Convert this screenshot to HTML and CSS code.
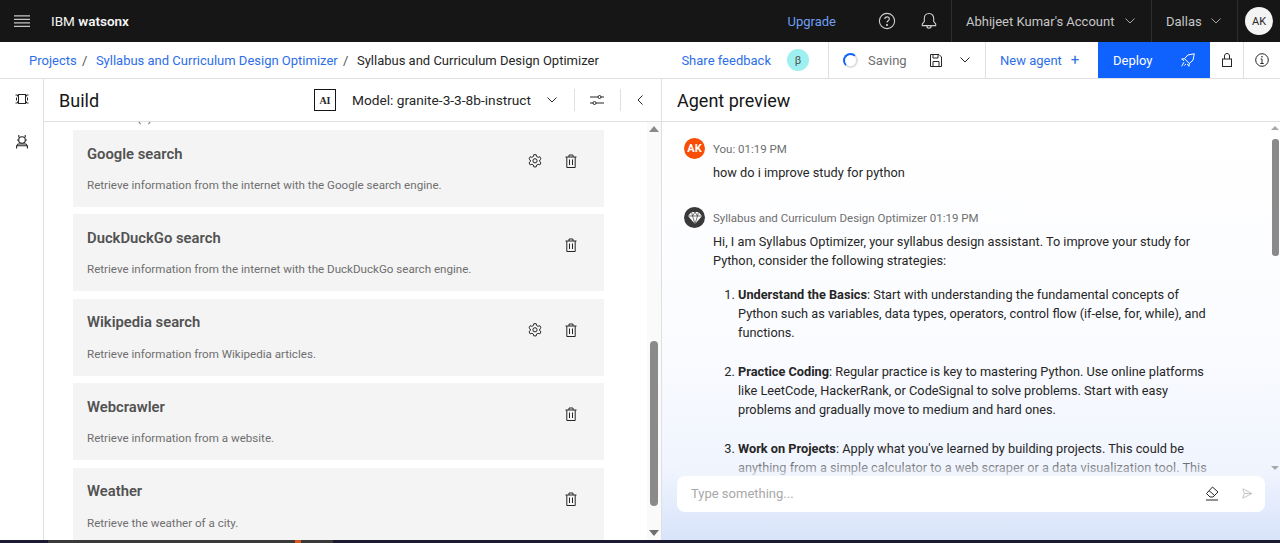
FILE: index.html

```html
<!DOCTYPE html>
<html lang="en">
<head>
  <meta charset="UTF-8">
  <title>IBM watsonx - Agent Lab</title>
  <link rel="stylesheet" href="styles.css">
</head>
<body>
  <header class="topbar">
    <svg class="menu-icon" width="16" height="12" viewBox="0 0 16 12"><path d="M0 .8h16M0 4.300h16M0 7.800h16M0 11.300h16" stroke="#c6c6c6" stroke-width="1.200"/></svg>
    <div class="brand">IBM <b>watsonx</b></div>
    <div class="topbar-right">
      <a class="upgrade">Upgrade</a>
      <svg class="top-icon help" width="18" height="18" viewBox="0 0 18 18" fill="none" stroke="#d0d0d0" stroke-width="1.100"><circle cx="9" cy="9" r="7.600"/><path d="M6.800 7.100c0-1.300 1-2.200 2.300-2.200s2.200.9 2.200 2c0 1.900-2.300 1.800-2.300 3.700"/><circle cx="9" cy="13" r=".5" fill="#d0d0d0"/></svg>
      <svg class="top-icon bell" width="18" height="18" viewBox="0 0 18 18" fill="none" stroke="#d0d0d0" stroke-width="1.100"><path d="M9 1.500c-3 0-4.700 2.300-4.700 5v3L2.300 12v1.600h13.400V12l-2-2.500v-3c0-2.700-1.700-5-4.700-5zM6.800 13.600c0 1.600 1 2.700 2.200 2.700s2.200-1.100 2.200-2.700"/></svg>
      <div class="top-cell account">Abhijeet Kumar's Account <svg class="chev" width="10" height="6" viewBox="0 0 10 6"><path d="M.5.5 5 5 9.500.5" fill="none" stroke="#a8a8a8"/></svg></div>
      <div class="top-cell region">Dallas <svg class="chev" width="10" height="6" viewBox="0 0 10 6"><path d="M.5.5 5 5 9.500.5" fill="none" stroke="#a8a8a8"/></svg></div>
      <div class="top-cell avatar-cell"><span class="avatar">AK</span></div>
    </div>
  </header>

  <nav class="crumbbar">
    <div class="crumbs">
      <a>Projects</a><span class="sep">/</span>
      <a>Syllabus and Curriculum Design Optimizer</a><span class="sep">/</span>
      <span class="current">Syllabus and Curriculum Design Optimizer</span>
    </div>
    <div class="actions">
      <a class="feedback">Share feedback</a>
      <span class="beta">β</span>
      <div class="action-cell saving">
        <span class="spinner"></span>
        <span class="saving-text">Saving</span>
        <svg class="save-icon" width="12" height="13" viewBox="0 0 12 13" fill="none" stroke="#262626"><path d="M.5.5h8.500l2.500 2.500v9.500H.5z"/><path d="M3 .5v3.500h5V.5M3 12.500V7.500h6v5"/></svg>
        <svg class="save-chev" width="10" height="6" viewBox="0 0 10 6"><path d="M.5.500 5 5 9.500.500" fill="none" stroke="#262626"/></svg>
      </div>
      <a class="action-cell new-agent">New agent <span class="plus">+</span></a>
      <a class="deploy">Deploy
        <svg width="14" height="14" viewBox="0 0 14 14" fill="none" stroke="#fff"><path d="M13.300.7 6.800 2 3.500 5.700 8.300 10.500 12 7.200zM3.500 5.700l-2.800.4 2.400 1.600M8.300 10.500l-.4 2.800-1.600-2.400M3 9.200 .7 13.300M4.800 11 3.500 12.500"/></svg>
      </a>
      <div class="icon-cell"><svg width="10" height="14" viewBox="0 0 10 14" fill="none" stroke="#262626"><rect x=".5" y="6" width="9" height="7.500"/><path d="M2.500 6V3c0-1.500 1-2.500 2.500-2.500S7.500 1.500 7.500 3v3"/></svg></div>
      <div class="icon-cell info"><svg width="14" height="14" viewBox="0 0 14 14" fill="none" stroke="#262626"><circle cx="7" cy="7" r="6.300"/><path d="M5.300 10.500h3.400M7 10.500V6H5.700"/><circle cx="7" cy="3.800" r=".4"/></svg></div>
    </div>
  </nav>

  <div class="workspace">
    <aside class="sidenav">
      <svg width="14" height="10" viewBox="0 0 14 10" fill="none" stroke="#262626"><rect x="3.500" y=".5" width="7" height="9"/><path d="M.5 1h2v1.500M.5 9h2V7.500M13.500 1h-2v1.500M13.500 9h-2V7.500M1.500 3.500v3M12.500 3.500v3"/></svg>
      <svg width="12" height="14" viewBox="0 0 12 14" fill="none" stroke="#262626" stroke-width="1.100"><circle cx="6" cy="5" r="3.300"/><path d="M2.800 0v2.500M9.200 0v2.500M1 5h1.500M9.500 5H11M.6 13.500V11l1.500-2h7.800l1.500 2v2.500M.6 10.800h10.800"/></svg>
    </aside>

    <section class="build">
      <div class="panel-head build-head">
        <h2>Build</h2>
        <span class="ai-box">AI</span>
        <span class="model">Model: granite-3-3-8b-instruct</span>
        <svg class="model-chev" width="10" height="6" viewBox="0 0 10 6"><path d="M.5.500 5 5 9.500.500" fill="none" stroke="#262626"/></svg>
        <span class="vsep"></span>
        <svg class="tune" width="14" height="12" viewBox="0 0 14 12" fill="none" stroke="#262626"><path d="M0 3h8M11 3h3M0 9h3M6 9h8"/><circle cx="9.500" cy="3" r="1.500"/><circle cx="4.500" cy="9" r="1.500"/></svg>
        <span class="vsep"></span>
        <svg class="collapse" width="6" height="10" viewBox="0 0 6 10"><path d="M5.500.5 1 5l4.500 4.500" fill="none" stroke="#262626"/></svg>
      </div>
      <div class="tools-area">
        <div class="tools">
          <div class="tools-label">Added tools (6)</div>
          <div class="tool">
            <div class="tool-text"><h3>Google search</h3><p>Retrieve information from the internet with the Google search engine.</p></div>
            <svg class="gear" width="14" height="14" viewBox="0 0 14 14" fill="none" stroke="#262626"><path d="M5.800.7h2.400l.4 1.800 1.500.8 1.700-.6 1.200 2.100-1.300 1.200v1.600l1.300 1.200-1.200 2.100-1.700-.6-1.500.8-.4 1.800H5.800l-.4-1.800-1.500-.8-1.700.6L1 8.800l1.300-1.200V6L1 4.800 2.200 2.700l1.700.6 1.500-.8z"/><circle cx="7" cy="6.800" r="2.100"/></svg>
            <svg class="trash" width="12" height="14" viewBox="0 0 12 14" fill="none" stroke="#262626"><path d="M.5 3h11M4 3V1h4v2M1.800 3v10.500h8.400V3M4.500 5.500v5.500M7.500 5.500v5.500"/></svg>
          </div>
          <div class="tool">
            <div class="tool-text"><h3>DuckDuckGo search</h3><p>Retrieve information from the internet with the DuckDuckGo search engine.</p></div>
            <svg class="trash" width="12" height="14" viewBox="0 0 12 14" fill="none" stroke="#262626"><path d="M.5 3h11M4 3V1h4v2M1.800 3v10.500h8.400V3M4.500 5.500v5.500M7.500 5.500v5.500"/></svg>
          </div>
          <div class="tool">
            <div class="tool-text"><h3>Wikipedia search</h3><p>Retrieve information from Wikipedia articles.</p></div>
            <svg class="gear" width="14" height="14" viewBox="0 0 14 14" fill="none" stroke="#262626"><path d="M5.800.7h2.400l.4 1.800 1.500.8 1.700-.6 1.200 2.100-1.300 1.200v1.600l1.300 1.200-1.200 2.100-1.700-.6-1.500.8-.4 1.800H5.800l-.4-1.800-1.500-.8-1.700.6L1 8.800l1.300-1.200V6L1 4.800 2.200 2.700l1.700.6 1.500-.8z"/><circle cx="7" cy="6.800" r="2.100"/></svg>
            <svg class="trash" width="12" height="14" viewBox="0 0 12 14" fill="none" stroke="#262626"><path d="M.5 3h11M4 3V1h4v2M1.800 3v10.500h8.400V3M4.500 5.500v5.500M7.500 5.500v5.500"/></svg>
          </div>
          <div class="tool">
            <div class="tool-text"><h3>Webcrawler</h3><p>Retrieve information from a website.</p></div>
            <svg class="trash" width="12" height="14" viewBox="0 0 12 14" fill="none" stroke="#262626"><path d="M.5 3h11M4 3V1h4v2M1.800 3v10.500h8.400V3M4.500 5.500v5.500M7.500 5.500v5.500"/></svg>
          </div>
          <div class="tool">
            <div class="tool-text"><h3>Weather</h3><p>Retrieve the weather of a city.</p></div>
            <svg class="trash" width="12" height="14" viewBox="0 0 12 14" fill="none" stroke="#262626"><path d="M.5 3h11M4 3V1h4v2M1.800 3v10.500h8.400V3M4.500 5.500v5.500M7.500 5.500v5.500"/></svg>
          </div>
        </div>
        <div class="scrollbar left-bar">
          <span class="arrow up"></span>
          <span class="thumb"></span>
          <span class="arrow down"></span>
        </div>
      </div>
    </section>

    <section class="preview">
      <div class="panel-head preview-head"><h2>Agent preview</h2></div>
      <div class="chat-area">
        <div class="chat">
          <div class="msg you">
            <div class="msg-head"><span class="msg-avatar orange">AK</span><span class="msg-meta">You: 01:19 PM</span></div>
            <div class="msg-body"><p>how do i improve study for python</p></div>
          </div>
          <div class="msg">
            <div class="msg-head">
              <span class="msg-avatar dark"><svg width="14" height="12" viewBox="0 0 14 12" fill="#fff"><path d="M3.500 0h7L14 4 7 12 0 4z"/><path d="M0 4h14M4.500 4 7 12l2.500-8M3.500 0l1 4 2.500-4 2.500 4 1-4" fill="none" stroke="#393939" stroke-width=".7"/></svg></span>
              <span class="msg-meta">Syllabus and Curriculum Design Optimizer 01:19 PM</span>
            </div>
            <div class="msg-body">
              <p>Hi, I am Syllabus Optimizer, your syllabus design assistant. To improve your study for Python, consider the following strategies:</p>
              <ol>
                <li><b>Understand the Basics</b>: Start with understanding the fundamental concepts of Python such as variables, data types, operators, control flow (if-else, for, while), and functions.</li>
                <li><b>Practice Coding</b>: Regular practice is key to mastering Python. Use online platforms like LeetCode, HackerRank, or CodeSignal to solve problems. Start with easy problems and gradually move to medium and hard ones.</li>
                <li><b>Work on Projects</b>: Apply what you've learned by building projects. This could be anything from a simple calculator to a web scraper or a data visualization tool. This</li>
              </ol>
            </div>
          </div>
        </div>
        <div class="scrollbar right-bar">
          <span class="arrow up"></span>
          <span class="thumb"></span>
          <span class="arrow down"></span>
        </div>
        <div class="composer">
          <span class="placeholder">Type something...</span>
          <svg class="eraser" width="14" height="15" viewBox="0 0 14 15" fill="none" stroke="#262626"><path d="M7.500 1 13 6l-5 5H5L1.500 7.500zM4 4.500l5.500 5M1 14h12"/></svg>
          <svg class="send" width="11" height="11" viewBox="0 0 11 11" fill="none" stroke="#c6c6c6"><path d="M.8.8 10 5.500.8 10.200 2.300 5.500zM2.300 5.500H10"/></svg>
        </div>
      </div>
    </section>
  </div>
  <div class="taskbar"><span class="task-active"><span class="task-dot"></span></span></div>
</body>
</html>
```

FILE: styles.css

```css
* {
  box-sizing: border-box;
}

html, body {
  height: 100%;
  margin: 0;
}

body {
  display: flex;
  flex-direction: column;
  overflow: hidden;
  font-family: Roboto, "Noto Sans", sans-serif;
  font-size: 13px;
  color: #262626;
  background: #fff;
}

a {
  color: #2d6ee8;
}

/* top black bar */
.topbar {
  flex: 0 0 42px;
  display: flex;
  align-items: center;
  background: #161616;
  color: #c6c6c6;
}

.menu-icon {
  margin-left: 14px;
}

.brand {
  margin-left: 21px;
  font-size: 13.500px;
  color: #f4f4f4;
}

.brand b {
  font-weight: 600;
}

.topbar-right {
  margin-left: auto;
  display: flex;
  align-items: center;
  height: 100%;
}

.upgrade {
  color: #6f9ff5;
  font-size: 13px;
  margin-right: 42px;
}

.top-icon.bell {
  margin-left: 24px;
  margin-right: 13px;
}

.top-cell {
  display: flex;
  align-items: center;
  height: 100%;
  border-left: 1px solid #2e2e2e;
  font-size: 13px;
  white-space: nowrap;
}

.chev {
  margin-left: auto;
}

.account {
  width: 200px;
  padding: 0 16px 0 14px;
}

.region {
  width: 86px;
  padding: 0 16px 0 14px;
}

.avatar-cell {
  width: 43px;
  justify-content: center;
}

.avatar {
  width: 28px;
  height: 28px;
  border-radius: 50%;
  background: #f4f4f4;
  color: #262626;
  font-size: 11px;
  display: flex;
  align-items: center;
  justify-content: center;
}

/* breadcrumb row */
.crumbbar {
  flex: 0 0 37px;
  display: flex;
  align-items: center;
  border-bottom: 1px solid #e0e0e0;
}

.crumbs {
  margin-left: 29px;
  font-size: 13px;
  white-space: nowrap;
}

.sep {
  margin: 0 5.300px;
  color: #525252;
}

.current {
  color: #262626;
}

.actions {
  margin-left: auto;
  display: flex;
  align-items: center;
  height: 100%;
}

.feedback {
  font-size: 13px;
}

.beta {
  width: 22px;
  height: 22px;
  margin: 0 19px 0 16px;
  border-radius: 50%;
  background: #9ef0f0;
  color: #525252;
  font-size: 11px;
  display: flex;
  align-items: center;
  justify-content: center;
}

.action-cell {
  display: flex;
  align-items: center;
  height: 100%;
  border-left: 1px solid #e0e0e0;
  white-space: nowrap;
}

.saving {
  width: 157px;
  padding-left: 14px;
}

.spinner {
  width: 15px;
  height: 15px;
  border-radius: 50%;
  border: 2px solid #e0e0e0;
  border-left-color: #0f62fe;
  border-top-color: #0f62fe;
}

.saving-text {
  margin-left: 10px;
  color: #6f6f6f;
}

.save-icon {
  margin-left: 23px;
}

.save-chev {
  margin-left: 18px;
}

.new-agent {
  width: 113px;
  padding-left: 14px;
}

.plus {
  margin-left: 9px;
  font-size: 15px;
}

.deploy {
  width: 112px;
  height: 100%;
  background: #0f62fe;
  color: #fff;
  display: flex;
  align-items: center;
  justify-content: space-between;
  padding: 0 15px;
}

.icon-cell {
  width: 33px;
  height: 100%;
  display: flex;
  align-items: center;
  justify-content: center;
}

.icon-cell.info {
  width: 37px;
  border-left: 1px solid #e0e0e0;
}

/* main area */
.workspace {
  flex: 1;
  min-height: 0;
  display: flex;
}

.sidenav {
  flex: 0 0 44px;
  border-right: 1px solid #e0e0e0;
  display: flex;
  flex-direction: column;
  align-items: center;
  padding-top: 15px;
  gap: 31px;
}

.build {
  flex: 0 0 618px;
  display: flex;
  flex-direction: column;
  min-width: 0;
  border-right: 1px solid #e0e0e0;
}

.panel-head {
  flex: 0 0 43px;
  display: flex;
  align-items: center;
  border-bottom: 1px solid #e0e0e0;
}

.panel-head h2 {
  margin: 0;
  font-size: 18px;
  font-weight: 400;
  color: #161616;
}

.build-head {
  padding-left: 15px;
}

.ai-box {
  margin-left: auto;
  width: 22px;
  height: 22px;
  border: 1px solid #161616;
  font-family: "Liberation Serif", serif;
  font-weight: 700;
  font-size: 10px;
  display: flex;
  align-items: center;
  justify-content: center;
}

.model {
  margin-left: 16px;
  font-size: 13.700px;
  color: #262626;
}

.model-chev {
  margin-left: 16px;
}

.vsep {
  width: 1px;
  height: 22px;
  background: #e0e0e0;
  margin-left: 17px;
}

.tune {
  margin-left: 15px;
}

.tune + .vsep {
  margin-left: 16px;
}

.collapse {
  margin: 0 18px 0 16px;
}

.tools-area {
  flex: 1;
  min-height: 0;
  display: flex;
  overflow: hidden;
}

.tools {
  flex: 1;
  min-width: 0;
  padding: 0 43px 0 29px;
  margin-top: -11px;
}

.tools-label {
  height: 19px;
  line-height: 14px;
  font-size: 11.500px;
  color: #525252;
}

.tool {
  height: 77px;
  margin-bottom: 7.400px;
  background: #f4f4f4;
  display: flex;
  align-items: flex-start;
  padding: 0 27px 0 14px;
}

.tool-text {
  flex: 1;
  padding-top: 14.500px;
}

.tool h3 {
  margin: 0;
  font-size: 14.800px;
  font-weight: 600;
  color: #525252;
}

.tool p {
  margin: 15.500px 0 0;
  font-size: 11.600px;
  color: #6f6f6f;
}

.gear {
  margin-top: 24px;
  margin-right: 23px;
}

.trash {
  margin-top: 24px;
}

/* fake scrollbars, the page does not actually scroll */
.scrollbar {
  position: relative;
  flex: 0 0 14px;
}

.left-bar {
  background: #fafafa;
}

.arrow {
  position: absolute;
  left: 2px;
  width: 0;
  height: 0;
  border-left: 5px solid transparent;
  border-right: 5px solid transparent;
}

.arrow.up {
  top: 4px;
  border-bottom: 6px solid #8a8a8a;
}

.arrow.down {
  bottom: 4px;
  border-top: 6px solid #6f6f6f;
}

.thumb {
  position: absolute;
  left: 3px;
  width: 8px;
  top: 219px;
  height: 165px;
  border-radius: 4px;
  background: #8a8a8a;
}

.preview {
  flex: 1;
  min-width: 0;
  display: flex;
  flex-direction: column;
}

.preview-head {
  padding-left: 15px;
}

.chat-area {
  position: relative;
  flex: 1;
  min-height: 0;
  display: flex;
  overflow: hidden;
  background: linear-gradient(to bottom, #fff 0%, #fbfcff 50%, #f1f5fe 82%, #d8e4fb 100%);
}

.chat {
  flex: 1;
  min-width: 0;
  padding: 16px 0 0 22px;
}

.msg {
  margin-bottom: 25px;
}

.msg-head {
  display: flex;
  align-items: center;
  height: 21px;
}

.msg-avatar {
  width: 21px;
  height: 21px;
  border-radius: 50%;
  display: flex;
  align-items: center;
  justify-content: center;
  color: #fff;
  font-size: 11px;
  font-weight: 700;
}

.orange {
  background: #fa4d05;
}

.dark {
  background: #393939;
}

.msg-meta {
  margin-left: 8px;
  font-size: 11.500px;
  color: #6f6f6f;
}

.msg-body {
  padding-left: 29px;
  margin-top: 4px;
  width: 531px;
  font-size: 12.750px;
  line-height: 19px;
  color: #262626;
}

.msg-body p {
  margin: 0;
}

.msg-body ol {
  margin: 15px 0 0;
  padding-left: 25px;
}

.msg-body li {
  margin-bottom: 20px;
}

.right-bar {
  flex: 0 0 10px;
}

.right-bar .thumb {
  left: 2px;
  width: 7px;
  top: 17px;
  height: 117px;
  border-radius: 3px;
}

.right-bar .arrow {
  left: 1px;
  border-left-width: 4px;
  border-right-width: 4px;
}

.right-bar .arrow.up {
  border-bottom: 4px solid #a8a8a8;
}

.right-bar .arrow.down {
  bottom: 70px;
  border-top: 4px solid #a8a8a8;
}

.composer {
  position: absolute;
  left: 15px;
  right: 15px;
  bottom: 28px;
  height: 36px;
  background: #fff;
  border-radius: 8px;
  display: flex;
  align-items: center;
  padding: 0 12px 2px 14px;
}

/* the message text fades out above the input */
.composer::before {
  content: "";
  position: absolute;
  left: 0;
  right: 0;
  bottom: 100%;
  height: 22px;
  background: linear-gradient(to bottom, rgba(241, 245, 254, 0), rgba(241, 245, 254, 0.8));
}

.placeholder {
  flex: 1;
  color: #a8a8a8;
}

.send {
  margin-left: 23px;
}

.taskbar {
  flex: 0 0 3px;
  display: flex;
  background: #1c1a2e;
}

.task-active {
  width: 285px;
  margin-left: 48px;
  background: #3a3a3a;
  display: flex;
  justify-content: flex-end;
  padding-right: 32px;
}

.task-dot {
  width: 6px;
  background: #d8591c;
}
```
